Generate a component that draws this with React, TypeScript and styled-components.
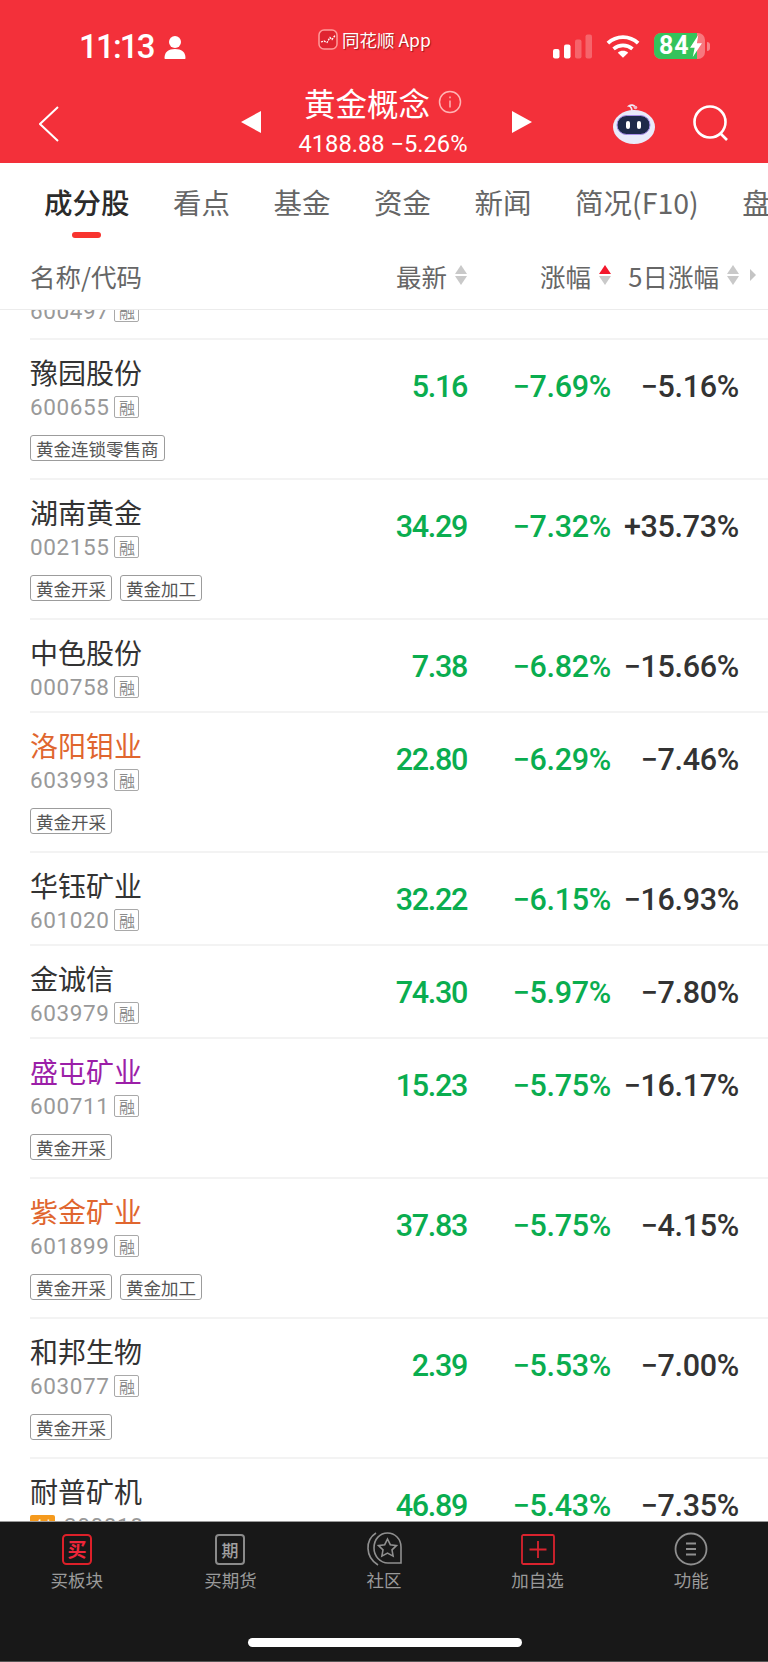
import React from "react";
import styled, { createGlobalStyle } from "styled-components";

const CJK = `"Noto Sans CJK SC", "Noto Sans", sans-serif`;
const NUM = `Roboto, "Noto Sans CJK SC", sans-serif`;

type Stock = {
  name: string;
  code: string;
  price: string;
  change: string;
  five: string;
  tags?: string[];
  nameColor?: string;
  board?: boolean;
};

const stocks: Stock[] = [
  { name: "豫园股份", code: "600655", price: "5.16", change: "−7.69%", five: "−5.16%", tags: ["黄金连锁零售商"] },
  { name: "湖南黄金", code: "002155", price: "34.29", change: "−7.32%", five: "+35.73%", tags: ["黄金开采", "黄金加工"] },
  { name: "中色股份", code: "000758", price: "7.38", change: "−6.82%", five: "−15.66%" },
  { name: "洛阳钼业", code: "603993", price: "22.80", change: "−6.29%", five: "−7.46%", tags: ["黄金开采"], nameColor: "#e0662f" },
  { name: "华钰矿业", code: "601020", price: "32.22", change: "−6.15%", five: "−16.93%" },
  { name: "金诚信", code: "603979", price: "74.30", change: "−5.97%", five: "−7.80%" },
  { name: "盛屯矿业", code: "600711", price: "15.23", change: "−5.75%", five: "−16.17%", tags: ["黄金开采"], nameColor: "#9c1fa8" },
  { name: "紫金矿业", code: "601899", price: "37.83", change: "−5.75%", five: "−4.15%", tags: ["黄金开采", "黄金加工"], nameColor: "#e0662f" },
  { name: "和邦生物", code: "603077", price: "2.39", change: "−5.53%", five: "−7.00%", tags: ["黄金开采"] },
  { name: "耐普矿机", code: "300818", price: "46.89", change: "−5.43%", five: "−7.35%", board: true },
];

const tabs = ["成分股", "看点", "基金", "资金", "新闻", "简况(F10)", "盘"];

const GlobalStyle = createGlobalStyle`
  html, body {
    margin: 0;
    padding: 0;
    background: #fff;
    font-family: ${CJK};
  }
  * { box-sizing: border-box; }
`;

const Page = styled.div`
  width: 768px;
  height: 1662px;
  display: flex;
  flex-direction: column;
  overflow: hidden;
  background: #fff;
`;

const RedHeader = styled.header`
  height: 163px;
  flex: none;
  background: #f3303a;
  color: #fff;
  display: flex;
  flex-direction: column;
`;

const StatusBar = styled.div`
  height: 78px;
  flex: none;
  padding: 14px 0 0 79px;
  display: grid;
  grid-template-columns: 239px 235px 1fr;
  align-items: center;
`;

const Clock = styled.div`
  display: flex;
  align-items: center;
  gap: 10px;
  margin-top: 1px;
  font: 500 33px/40px Roboto, sans-serif;
  letter-spacing: -1.8px;
`;

const AppLabel = styled.div`
  display: flex;
  align-items: center;
  gap: 4px;
  margin-top: -13px;
  font-size: 17.5px;
  line-height: 24px;
  white-space: nowrap;
  text-shadow: 1px 1px 1px rgba(90, 0, 0, 0.55);
`;

const StatusIcons = styled.div`
  display: flex;
  align-items: center;
  gap: 14px;
`;

const Battery = styled.div`
  width: 51px;
  height: 26px;
  border-radius: 7px;
  overflow: hidden;
  background: rgba(255, 255, 255, 0.35);
`;

const BatteryFill = styled.div`
  height: 100%;
  width: 84%;
  background: #34c35b;
  display: flex;
  align-items: center;
  padding-left: 5px;
  font: 700 25px/26px Roboto, sans-serif;
  letter-spacing: 1px;
  white-space: nowrap;
  svg {
    flex: none;
  }
`;

const BatteryNub = styled.div`
  width: 3px;
  height: 9px;
  margin-left: -12px;
  border-radius: 0 3px 3px 0;
  background: rgba(255, 255, 255, 0.4);
`;

const NavRow = styled.div`
  flex: 1;
  display: grid;
  grid-template-columns: 161px 88px 190px 58px 1fr;
  align-items: center;
  padding-left: 39px;
`;

const BackButton = styled.div`
  display: flex;
  align-items: center;
  height: 40px;
  margin-top: 7px;
`;

const Arrow = styled.div<{ $left?: boolean }>`
  width: 0;
  height: 0;
  margin-top: 2px;
  justify-self: ${(p) => (p.$left ? "end" : "start")};
  margin-right: ${(p) => (p.$left ? "27px" : "0")};
  margin-left: ${(p) => (p.$left ? "0" : "34px")};
  border-top: 11px solid transparent;
  border-bottom: 11px solid transparent;
  ${(p) => (p.$left ? "border-right: 20px solid #fff;" : "border-left: 20px solid #fff;")}
`;

const TitleBlock = styled.div`
  display: flex;
  flex-direction: column;
  align-items: center;
  margin-top: -3px;
`;

const TitleLine = styled.div`
  display: flex;
  align-items: center;
  gap: 8px;
  font-size: 31.5px;
  line-height: 40px;
  white-space: nowrap;
`;

const IndexLine = styled.div`
  font: 400 23.7px/26px ${NUM};
  white-space: nowrap;
  margin-top: 9px;
`;

const NavTools = styled.div`
  display: flex;
  align-items: center;
  gap: 37px;
  padding-left: 76px;
  margin-top: 6px;
`;

const TabBar = styled.nav`
  height: 84px;
  flex: none;
  display: flex;
  overflow: hidden;
  padding-left: 44px;
`;

const Tab = styled.div<{ $active?: boolean }>`
  position: relative;
  flex: none;
  margin-right: 43.5px;
  padding-top: 19px;
  font-size: 28.5px;
  line-height: 40px;
  font-weight: ${(p) => (p.$active ? 500 : 400)};
  color: ${(p) => (p.$active ? "#2b2b2b" : "#666")};
`;

const TabMark = styled.span`
  position: absolute;
  left: 28px;
  top: 69px;
  width: 29px;
  height: 6px;
  border-radius: 3px;
  background: #f8342f;
`;

const ColumnHeader = styled.div`
  height: 63px;
  flex: none;
  display: grid;
  grid-template-columns: 1fr 100px 144px 128px 29px;
  align-items: center;
  padding: 0 0 6px 30px;
  font-size: 25.5px;
  color: #666;
  border-bottom: 1px solid #ececec;
  background: #fff;
`;

const SortCell = styled.div`
  display: flex;
  align-items: center;
  justify-content: flex-end;
  gap: 8px;
  white-space: nowrap;
`;

const Caret = styled.div`
  display: flex;
  flex-direction: column;
  gap: 2px;
`;

const CaretPart = styled.span<{ $down?: boolean; $on?: boolean }>`
  width: 0;
  height: 0;
  border-left: 6px solid transparent;
  border-right: 6px solid transparent;
  ${(p) => (p.$down ? "border-top" : "border-bottom")}: 9px solid ${(p) => (p.$on ? "#f3182c" : "#c9c9c9")};
`;

const Chevron = styled.span`
  width: 0;
  height: 0;
  margin-left: 11px;
  border-top: 6px solid transparent;
  border-bottom: 6px solid transparent;
  border-left: 6px solid #c4c4c4;
`;

const List = styled.main`
  flex: 1;
  min-height: 0;
  overflow: hidden;
`;

const CutRow = styled.div`
  height: 30px;
  margin-left: 30px;
  border-bottom: 2px solid #f3f3f3;
  overflow: hidden;
`;

const CutCode = styled.div`
  display: flex;
  align-items: center;
  gap: 5px;
  margin-top: -12px;
  height: 26px;
`;

const Row = styled.div`
  margin-left: 30px;
  padding-top: 12px;
  border-bottom: 2px solid #f3f3f3;
`;

const RowMain = styled.div`
  display: grid;
  grid-template-columns: 1fr 100px 144px 128px;
  padding-right: 29px;
  align-items: center;
  height: 66px;
`;

const Name = styled.div<{ $color?: string }>`
  font-size: 28px;
  line-height: 40px;
  color: ${(p) => p.$color ?? "#333"};
`;

const CodeLine = styled.div<{ $board?: boolean }>`
  display: flex;
  align-items: center;
  gap: ${(p) => (p.$board ? "9px" : "5px")};
  height: 26px;
  margin-top: 2px;
`;

const Code = styled.span`
  font: 400 22.5px/26px ${NUM};
  color: #999;
  letter-spacing: 0.6px;
`;

const MarginBadge = styled.span`
  width: 25px;
  height: 22px;
  display: flex;
  align-items: center;
  justify-content: center;
  border: 1px solid #a9a9a9;
  border-radius: 2px;
  font-size: 16px;
  color: #8c8c8c;
`;

const BoardBadge = styled.span`
  width: 25px;
  height: 22px;
  display: flex;
  align-items: center;
  justify-content: center;
  border-radius: 2px;
  background: #f59a1d;
  font-size: 16px;
  color: #fff;
`;

const Value = styled.div<{ $color: string; $tight?: boolean }>`
  font: 500 30.5px/34px ${NUM};
  letter-spacing: ${(p) => (p.$tight ? "-1.3px" : "-0.3px")};
  text-align: right;
  white-space: nowrap;
  margin-top: 1px;
  color: ${(p) => p.$color};
`;

const TagRow = styled.div`
  display: flex;
  gap: 8px;
  height: 60px;
  padding-top: 17px;
`;

const Tag = styled.span`
  height: 26px;
  padding: 0 5px;
  display: flex;
  align-items: center;
  border: 1px solid #9c9c9c;
  border-radius: 3px;
  font-size: 17.5px;
  color: #555;
`;

const NoTagPad = styled.div`
  height: 13px;
`;

const Footer = styled.footer`
  position: relative;
  height: 141px;
  flex: none;
  background: #181818;
  border-top: 1px solid #999;
  border-bottom: 1px solid #555;
  display: grid;
  grid-template-columns: repeat(5, 1fr);
  padding-top: 10px;
`;

const FooterItem = styled.div`
  display: flex;
  flex-direction: column;
  align-items: center;
  gap: 1px;
  height: 72px;
  font-size: 17.5px;
  line-height: 26px;
  color: #9a9a9a;
`;

const FooterIcon = styled.div`
  height: 34px;
  display: flex;
  align-items: center;
  justify-content: center;
`;

const HomeBar = styled.div`
  position: absolute;
  left: 248px;
  top: 116px;
  width: 274px;
  height: 9px;
  border-radius: 5px;
  background: #fff;
`;

const PersonIcon = () => (
  <svg width="22" height="24" viewBox="0 0 22 24" fill="#fff">
    <circle cx="11" cy="7" r="6" />
    <path d="M0.500 23c0-6 4-9 10.500-9s10.500 3 10.500 9c0 .6-.4 1-1 1H1.500c-.6 0-1-.4-1-1z" />
  </svg>
);

const AppLogo = () => (
  <svg width="20" height="21" viewBox="0 0 20 21">
    <rect x="1" y="1" width="18" height="19" rx="5" fill="#e02430" stroke="#ff9a9a" strokeWidth="1.500" />
    <path d="M3 13l3-1 3 1.500 3-5 2 2 3-4" fill="none" stroke="#fff" strokeWidth="1.300" strokeDasharray="2 1" />
  </svg>
);

const SignalIcon = () => (
  <svg width="39" height="25" viewBox="0 0 39 25" fill="#fff">
    <rect x="0" y="15" width="6.500" height="9.500" rx="2" />
    <rect x="11" y="10.500" width="6.500" height="14" rx="2" />
    <rect x="22" y="5.500" width="6.500" height="19" rx="2" opacity="0.25" />
    <rect x="32.500" y="0.500" width="6.500" height="24" rx="2" opacity="0.25" />
  </svg>
);

const WifiIcon = () => (
  <svg width="34" height="25" viewBox="0 0 36 26" fill="none" stroke="#fff" strokeWidth="4">
    <path d="M2 9.500C11 1 25 1 34 9.500" />
    <path d="M8 15.500c6-5 14-5 20 0" />
    <path d="M18 25l-5.500-5.500c3-2.500 8-2.500 11 0z" fill="#fff" stroke="none" />
  </svg>
);

const BoltIcon = () => (
  <svg width="12" height="22" viewBox="0 0 13 24" fill="#fff">
    <path d="M9 0L0 14h5L3 24l10-15H7.500z" />
  </svg>
);

const BackIcon = () => (
  <svg width="20" height="36" viewBox="0 0 20 36" fill="none" stroke="#fff" strokeWidth="2">
    <path d="M19 1L1 18l18 17" />
  </svg>
);

const InfoIcon = () => (
  <svg width="24" height="24" viewBox="0 0 24 24" fill="none" stroke="#ffb4b4" strokeWidth="1.500">
    <circle cx="12" cy="12" r="10.500" />
    <path d="M12 10.500v7M12 6.500v1.800" />
  </svg>
);

const RobotIcon = () => (
  <svg width="44" height="42" viewBox="0 0 44 42">
    <path d="M20 9c0-3-1-5.500-3-6 2-1.500 5-1 6 1" fill="none" stroke="#eee9f6" strokeWidth="1.800" />
    <circle cx="23.500" cy="4.500" r="1.800" fill="#f5b8c8" />
    <ellipse cx="22" cy="24" rx="21" ry="17" fill="#e9ebfa" />
    <rect x="5" y="12.500" width="33" height="19" rx="9.500" fill="#1e2a4a" stroke="#a78ee8" strokeWidth="1" />
    <rect x="14" y="18" width="4" height="8" rx="2" fill="#fff" />
    <rect x="25" y="18" width="4" height="8" rx="2" fill="#fff" />
  </svg>
);

const SearchIcon = () => (
  <svg width="37" height="37" viewBox="0 0 37 37" fill="none" stroke="#fff" strokeWidth="2.600">
    <circle cx="17" cy="17" r="15.500" />
    <path d="M27 28l7 7" />
  </svg>
);

const BuyIcon = () => (
  <svg width="30" height="31" viewBox="0 0 30 31" fill="none">
    <rect x="1" y="1" width="28" height="29" rx="3.500" stroke="#dc2029" strokeWidth="2" />
    <text x="15" y="23" textAnchor="middle" fontSize="19" fontWeight="700" fill="#f0263a" fontFamily={CJK}>买</text>
  </svg>
);

const FuturesIcon = () => (
  <svg width="30" height="31" viewBox="0 0 30 31" fill="none">
    <rect x="1" y="1" width="28" height="29" rx="3" stroke="#8a8a8a" strokeWidth="2" />
    <text x="15" y="22.500" textAnchor="middle" fontSize="17" fontWeight="500" fill="#a0a0a0" fontFamily={CJK}>期</text>
  </svg>
);

const CommunityIcon = () => (
  <svg width="36" height="34" viewBox="0 0 36 34" fill="none" stroke="#8f8f8f" strokeWidth="1.600">
    <path d="M10 1C-1 8-1 25 12 33" />
    <path d="M35 31V15C35 7 29 1 21.500 1S8 7 8 16c0 8 6 15 14 15z" />
    <path d="M21.500 7l2.800 5.700 6.200.9-4.500 4.300 1.100 6.200-5.600-3-5.600 3 1.100-6.200-4.500-4.300 6.200-.9z" />
  </svg>
);

const AddIcon = () => (
  <svg width="34" height="31" viewBox="0 0 34 31" fill="none" stroke="#d9232e" strokeWidth="1.800">
    <rect x="1" y="1" width="32" height="29" rx="1.500" />
    <path d="M17 7v17M8.500 15.500h17" />
  </svg>
);

const MenuIcon = () => (
  <svg width="34" height="34" viewBox="0 0 34 34" fill="none" stroke="#8f8f8f">
    <circle cx="17" cy="17" r="15.500" strokeWidth="1.800" />
    <path d="M12 11.500h10M12 17h10M12 22.500h10" strokeWidth="2" />
  </svg>
);

const footerItems = [
  { label: "买板块", icon: <BuyIcon /> },
  { label: "买期货", icon: <FuturesIcon /> },
  { label: "社区", icon: <CommunityIcon /> },
  { label: "加自选", icon: <AddIcon /> },
  { label: "功能", icon: <MenuIcon /> },
];

function SortHead({ label, on }: { label: string; on?: boolean }) {
  return (
    <SortCell>
      {label}
      <Caret>
        <CaretPart $on={on} />
        <CaretPart $down />
      </Caret>
    </SortCell>
  );
}

function StockRow({ stock }: { stock: Stock }) {
  return (
    <Row>
      <RowMain>
        <div>
          <Name $color={stock.nameColor}>{stock.name}</Name>
          <CodeLine $board={stock.board}>
            {stock.board && <BoardBadge>创</BoardBadge>}
            <Code>{stock.code}</Code>
            {!stock.board && <MarginBadge>融</MarginBadge>}
          </CodeLine>
        </div>
        <Value $color="#0aad4f" $tight>{stock.price}</Value>
        <Value $color="#0aad4f">{stock.change}</Value>
        <Value $color="#333">{stock.five}</Value>
      </RowMain>
      {stock.tags ? (
        <TagRow>
          {stock.tags.map((t) => (
            <Tag key={t}>{t}</Tag>
          ))}
        </TagRow>
      ) : (
        <NoTagPad />
      )}
    </Row>
  );
}

export default function App() {
  return (
    <Page>
      <GlobalStyle />
      <RedHeader>
        <StatusBar>
          <Clock>
            11:13
            <PersonIcon />
          </Clock>
          <AppLabel>
            <AppLogo />
            同花顺 App
          </AppLabel>
          <StatusIcons>
            <SignalIcon />
            <WifiIcon />
            <Battery>
              <BatteryFill>
                84
                <BoltIcon />
              </BatteryFill>
            </Battery>
            <BatteryNub />
          </StatusIcons>
        </StatusBar>
        <NavRow>
          <BackButton>
            <BackIcon />
          </BackButton>
          <Arrow $left />
          <TitleBlock>
            <TitleLine>
              黄金概念
              <InfoIcon />
            </TitleLine>
            <IndexLine>4188.88 −5.26%</IndexLine>
          </TitleBlock>
          <Arrow />
          <NavTools>
            <RobotIcon />
            <SearchIcon />
          </NavTools>
        </NavRow>
      </RedHeader>
      <TabBar>
        {tabs.map((t, i) => (
          <Tab key={t} $active={i === 0}>
            {t}
            {i === 0 && <TabMark />}
          </Tab>
        ))}
      </TabBar>
      <ColumnHeader>
        <div>名称/代码</div>
        <SortHead label="最新" />
        <SortHead label="涨幅" on />
        <SortHead label="5日涨幅" />
        <Chevron />
      </ColumnHeader>
      <List>
        <CutRow>
          <CutCode>
            <Code>600497</Code>
            <MarginBadge>融</MarginBadge>
          </CutCode>
        </CutRow>
        {stocks.map((s) => (
          <StockRow key={s.code} stock={s} />
        ))}
      </List>
      <Footer>
        {footerItems.map((f) => (
          <FooterItem key={f.label}>
            <FooterIcon>{f.icon}</FooterIcon>
            {f.label}
          </FooterItem>
        ))}
        <HomeBar />
      </Footer>
    </Page>
  );
}
